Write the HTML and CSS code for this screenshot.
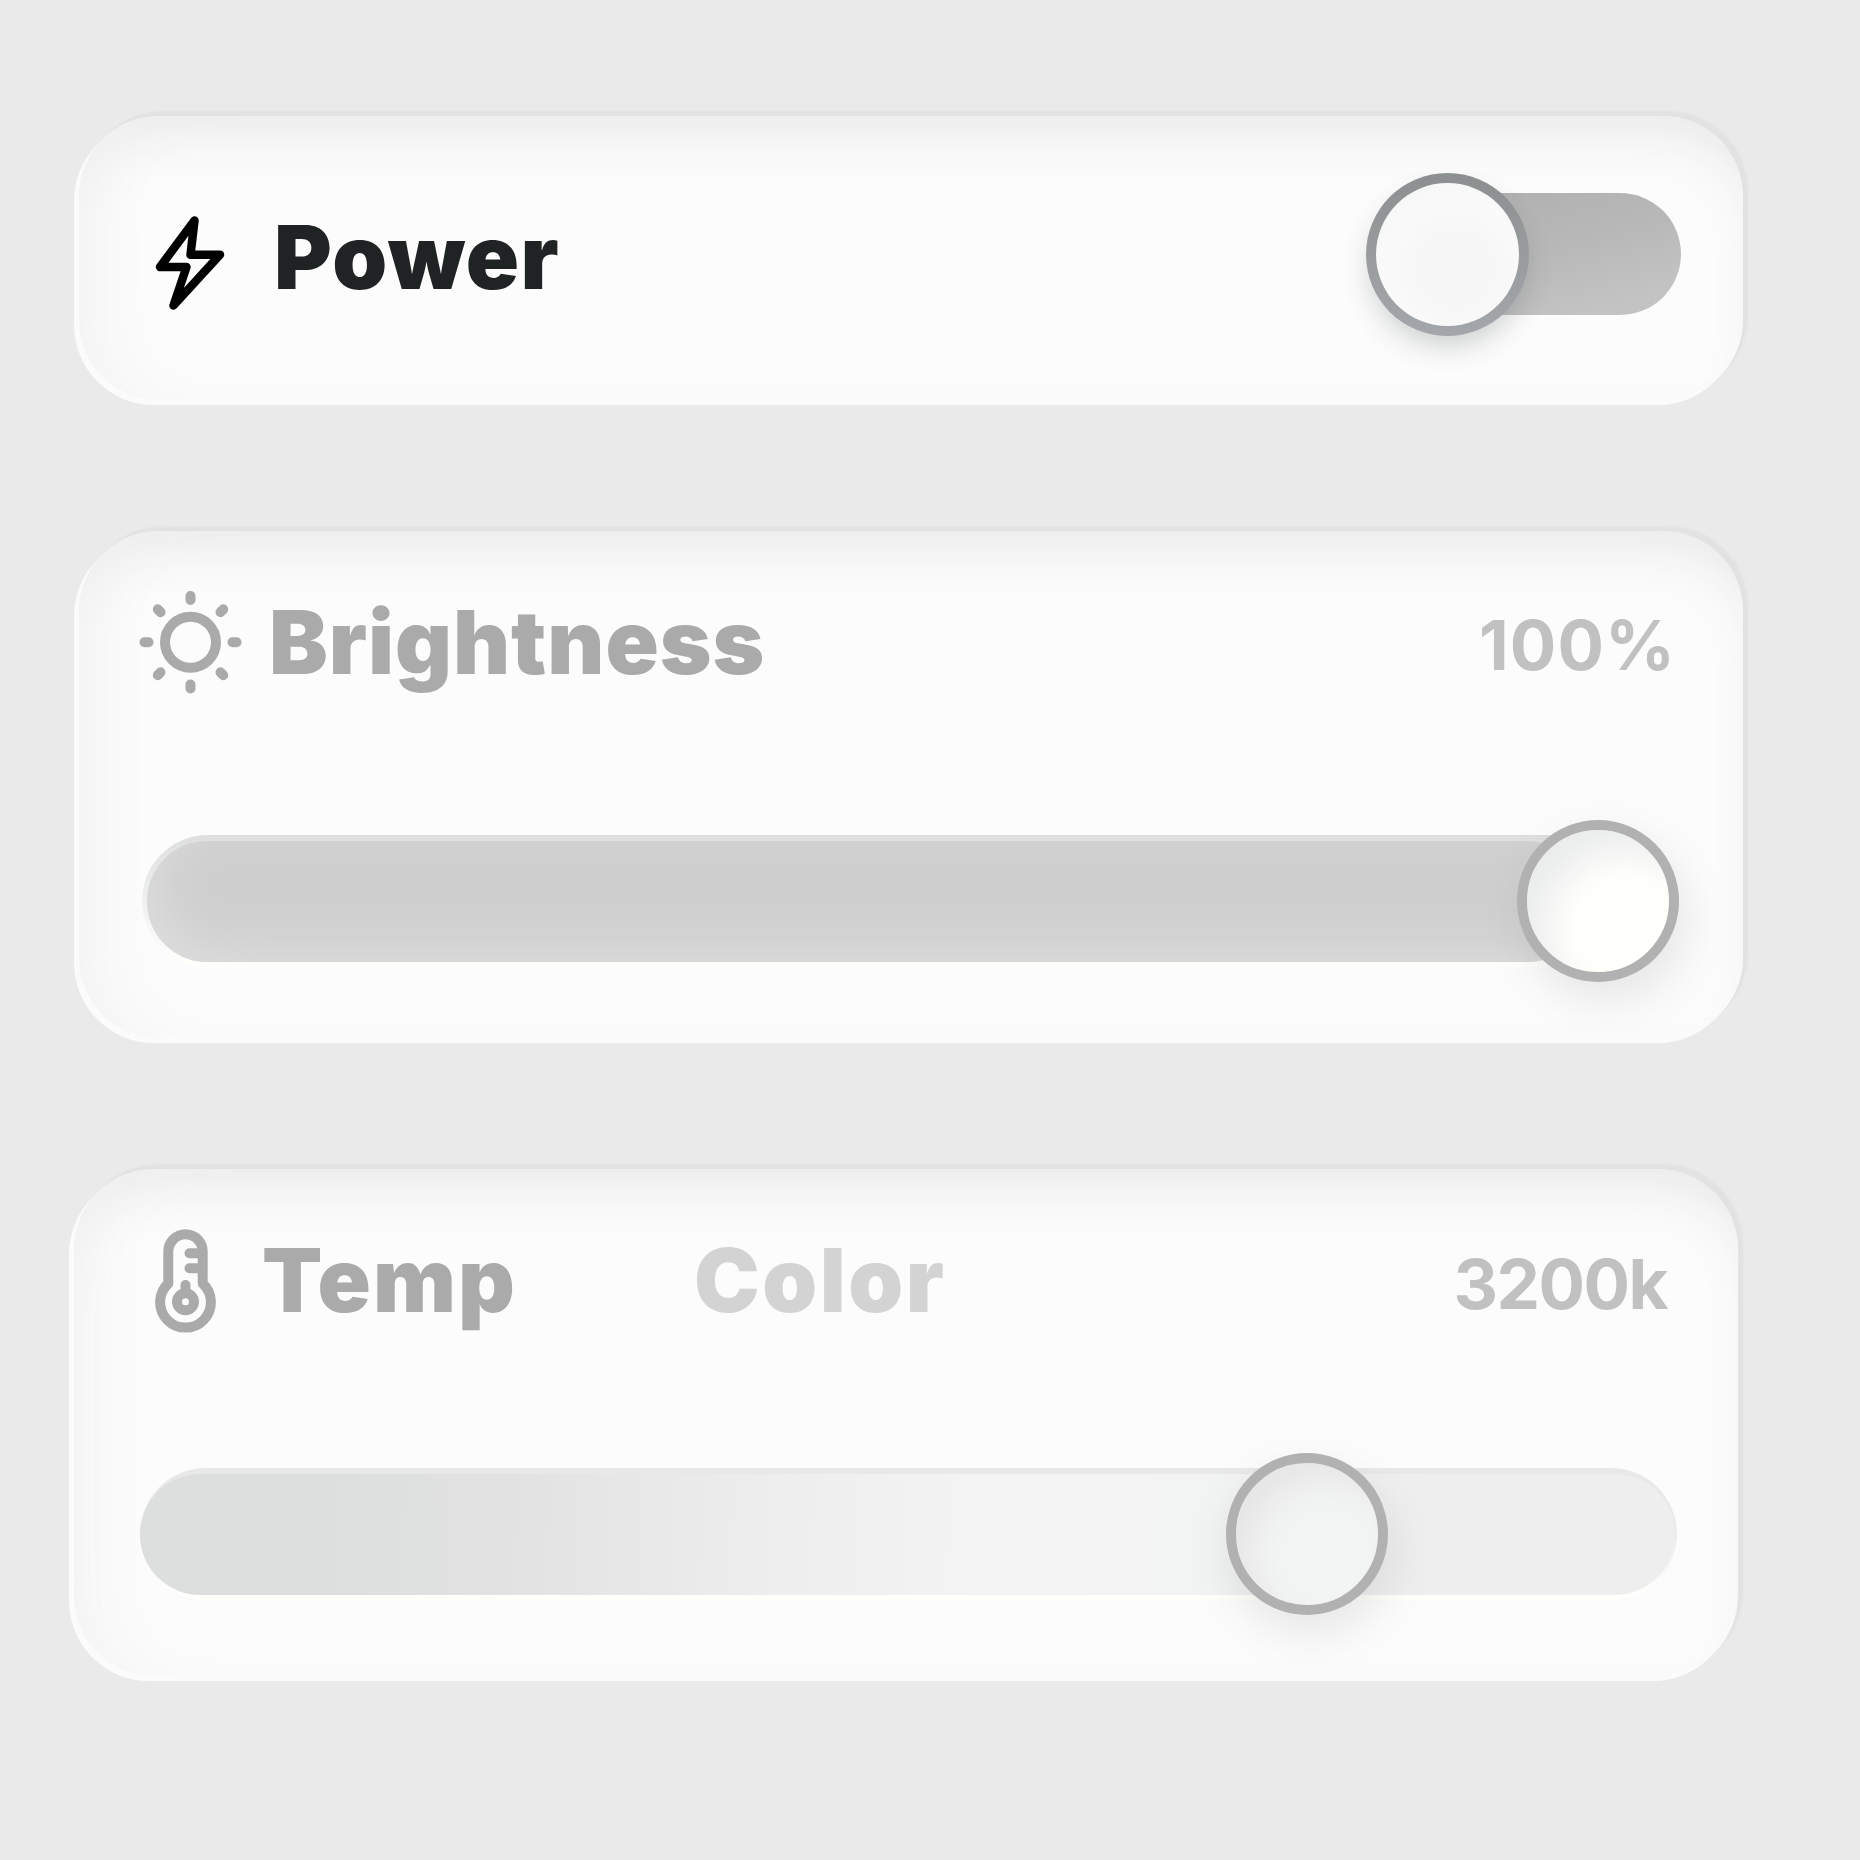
FILE: index.html
```html
<!DOCTYPE html>
<html lang="en">
<head>
  <meta charset="UTF-8" />
  <meta name="viewport" content="width=device-width, initial-scale=1.0"/>
  <title>Light control</title>
  <link rel="stylesheet" href="styles.css">
</head>
<body>

  <main class="panel">

    <!-- Power -->
    <section class="card card-power">
      <div class="card-header">
        <svg class="icon icon-power" viewBox="0 0 104 104">
          <path d="M55.5 15.5 21 62h26.500L34.500 100.500 81 49.700H51.500Z"/>
        </svg>
        <h2 class="title title-power">Power</h2>
      </div>
      <div class="switch">
        <div class="switch-knob"></div>
      </div>
    </section>

    <!-- Brightness -->
    <section class="card card-brightness">
      <div class="card-header">
        <svg class="icon" viewBox="0 0 104 104">
          <circle cx="51.500" cy="52.300" r="25.500"/>
          <path d="M51.500 6v4M51.500 94.500v4M5.500 52.300h4M93.500 52.300h4M18.800 19.300l2.700 2.900M84.200 19.300l-2.700 2.900M18.800 85.200l2.700-2.900M84.200 85.200l-2.700-2.900"/>
        </svg>
        <h2 class="title title-brightness">Brightness</h2>
        <span class="value value-percent">100%</span>
      </div>
      <div class="slider">
        <div class="slider-fill"></div>
        <div class="slider-knob" style="left: 1375px"></div>
      </div>
    </section>

    <!-- Temperature / color -->
    <section class="card card-temp">
      <div class="card-header">
        <svg class="icon" viewBox="0 0 104 104">
          <path d="M34.300 54.500V22.500a17.200 17.200 0 0 1 34.400 0V54.500a25.400 25.400 0 1 1-34.400 0Z"/>
          <path d="M55.500 24.300h12M55.500 39.200h12M51.500 56v8"/>
          <circle cx="51.500" cy="72.700" r="8.500"/>
        </svg>
        <h2 class="title title-temp">Temp</h2>
        <h2 class="title title-color">Color</h2>
        <span class="value value-kelvin">3200k</span>
      </div>
      <div class="slider slider-temp">
        <div class="slider-fill"></div>
        <div class="slider-knob" style="left: 1086px"></div>
      </div>
    </section>

  </main>

</body>
</html>
```
FILE: styles.css
```css
* {
  box-sizing: border-box;
}

body {
  font-family: Inter, "Liberation Sans", sans-serif;
  background: #eaeaea;
  margin: 0;
  padding: 0;
  min-height: 100vh;
}

.panel {
  display: flex;
  flex-direction: column;
  padding: 116px 117px 100px 79px;
}

.card {
  width: 1664px;
  height: 507px;
  padding: 59px 71px 0 60px;
  border-radius: 80px;
  background: #fcfcfc;
  box-shadow:
    -5px 5px 0 #fbfbfb,
    5px -5px 2px #e2e2e2,
    inset 44px 0 70px -32px #f2f3f3,
    inset 0 36px 64px -30px #e0e3e1;
}

.card-power {
  display: flex;
  justify-content: space-between;
  height: 284px;
  padding: 57px 62px 0 60px;
}

.card-power .card-header {
  margin-top: 32px;
}

.card-brightness {
  margin-top: 131px;
}

.card-temp {
  margin-top: 131px;
  margin-left: -5px;
  padding-top: 60px;
}

.card-header {
  display: flex;
  height: 104px;
}

.icon {
  width: 104px;
  height: 104px;
  flex: none;
  overflow: visible;
  fill: none;
  stroke: #aaaaaa;
  stroke-width: 10;
  stroke-linecap: round;
  stroke-linejoin: round;
}

.icon-power {
  stroke: #000;
  stroke-width: 8.5;
}

.title {
  margin: 0;
  font-size: 88px;
  font-weight: 900;
  line-height: 104px;
  letter-spacing: 1px;
  color: #aaaaaa;
}

.title-power {
  margin-left: 31px;
  letter-spacing: 1.5px;
  color: #202324;
}

.title-brightness {
  margin-left: 26px;
}

.title-temp {
  width: 432px;
  margin-left: 24px;
  line-height: 103px;
  letter-spacing: 2px;
}

.title-color {
  line-height: 103px;
  letter-spacing: 2.5px;
  color: #d3d3d3;
}

.value {
  margin-top: 3px;
  margin-left: auto;
  font-size: 69px;
  font-weight: 650;
  line-height: 104px;
  color: #c1c1c1;
}

.value-percent {
  margin-right: -4px;
  letter-spacing: 1px;
}

.value-kelvin {
  letter-spacing: -1.5px;
}

/* Switch */
.switch {
  position: relative;
  width: 294px;
  height: 122px;
  margin-top: 20px;
  border-radius: 61px;
  background: linear-gradient(165deg, #b0b0b0 10%, #b8b8b8 50%, #c3c3c3 85%);
}

.switch-knob {
  position: absolute;
  top: -20px;
  left: -21px;
  width: 163px;
  height: 163px;
  border: 10px solid transparent;
  border-radius: 50%;
  background:
    radial-gradient(circle at 55% 60%, #f7f7f7 35%, #fafafa 60%, #eff1f1 100%) padding-box,
    linear-gradient(#8b8f8f, #989c9d 50%, #a3a7ab) border-box;
  box-shadow: 0 14px 28px -4px rgba(60, 70, 65, 0.24);
}

/* Sliders */
.slider {
  position: relative;
  width: 1537px;
  height: 132px;
  margin: 141px 0 0 3px;
  padding: 6px 0 5px 5px;
  border-radius: 66px;
  background: linear-gradient(#dcdfde, #eef1f0 50%, #fffffc 96%);
}

.slider-fill {
  width: 1440px;
  height: 121px;
  border-radius: 61px;
  background: #cfcfcf;
  box-shadow: inset 14px -18px 50px -8px #dedede;
}

.slider-knob {
  position: absolute;
  top: -15px;
  width: 162px;
  height: 162px;
  border: 10px solid #b1b1b1;
  border-radius: 50%;
  background: #fffffc;
  box-shadow:
    8px 18px 44px rgba(90, 100, 95, 0.14),
    inset 28px 28px 36px -8px #ebeded;
}

.slider-temp {
  margin: 135px 0 0 6px;
  padding: 6px 0 5px 0;
  background: linear-gradient(#e8e8e8, #ebebeb 50%, #fffffc 96%);
}

.slider-temp .slider-fill {
  width: 1535px;
  background: linear-gradient(92deg, #dcdfde 12%, #e2e2e2 24%, #ecedec 40%, #f4f4f4 55%, #f2f3f3 70%, #eeeeee 84%);
  box-shadow: none;
}

.slider-temp .slider-knob {
  background: #f3f4f4;
  box-shadow:
    4px 18px 44px rgba(90, 100, 95, 0.14),
    inset 20px 20px 40px -8px #e4e4e4;
}
```
